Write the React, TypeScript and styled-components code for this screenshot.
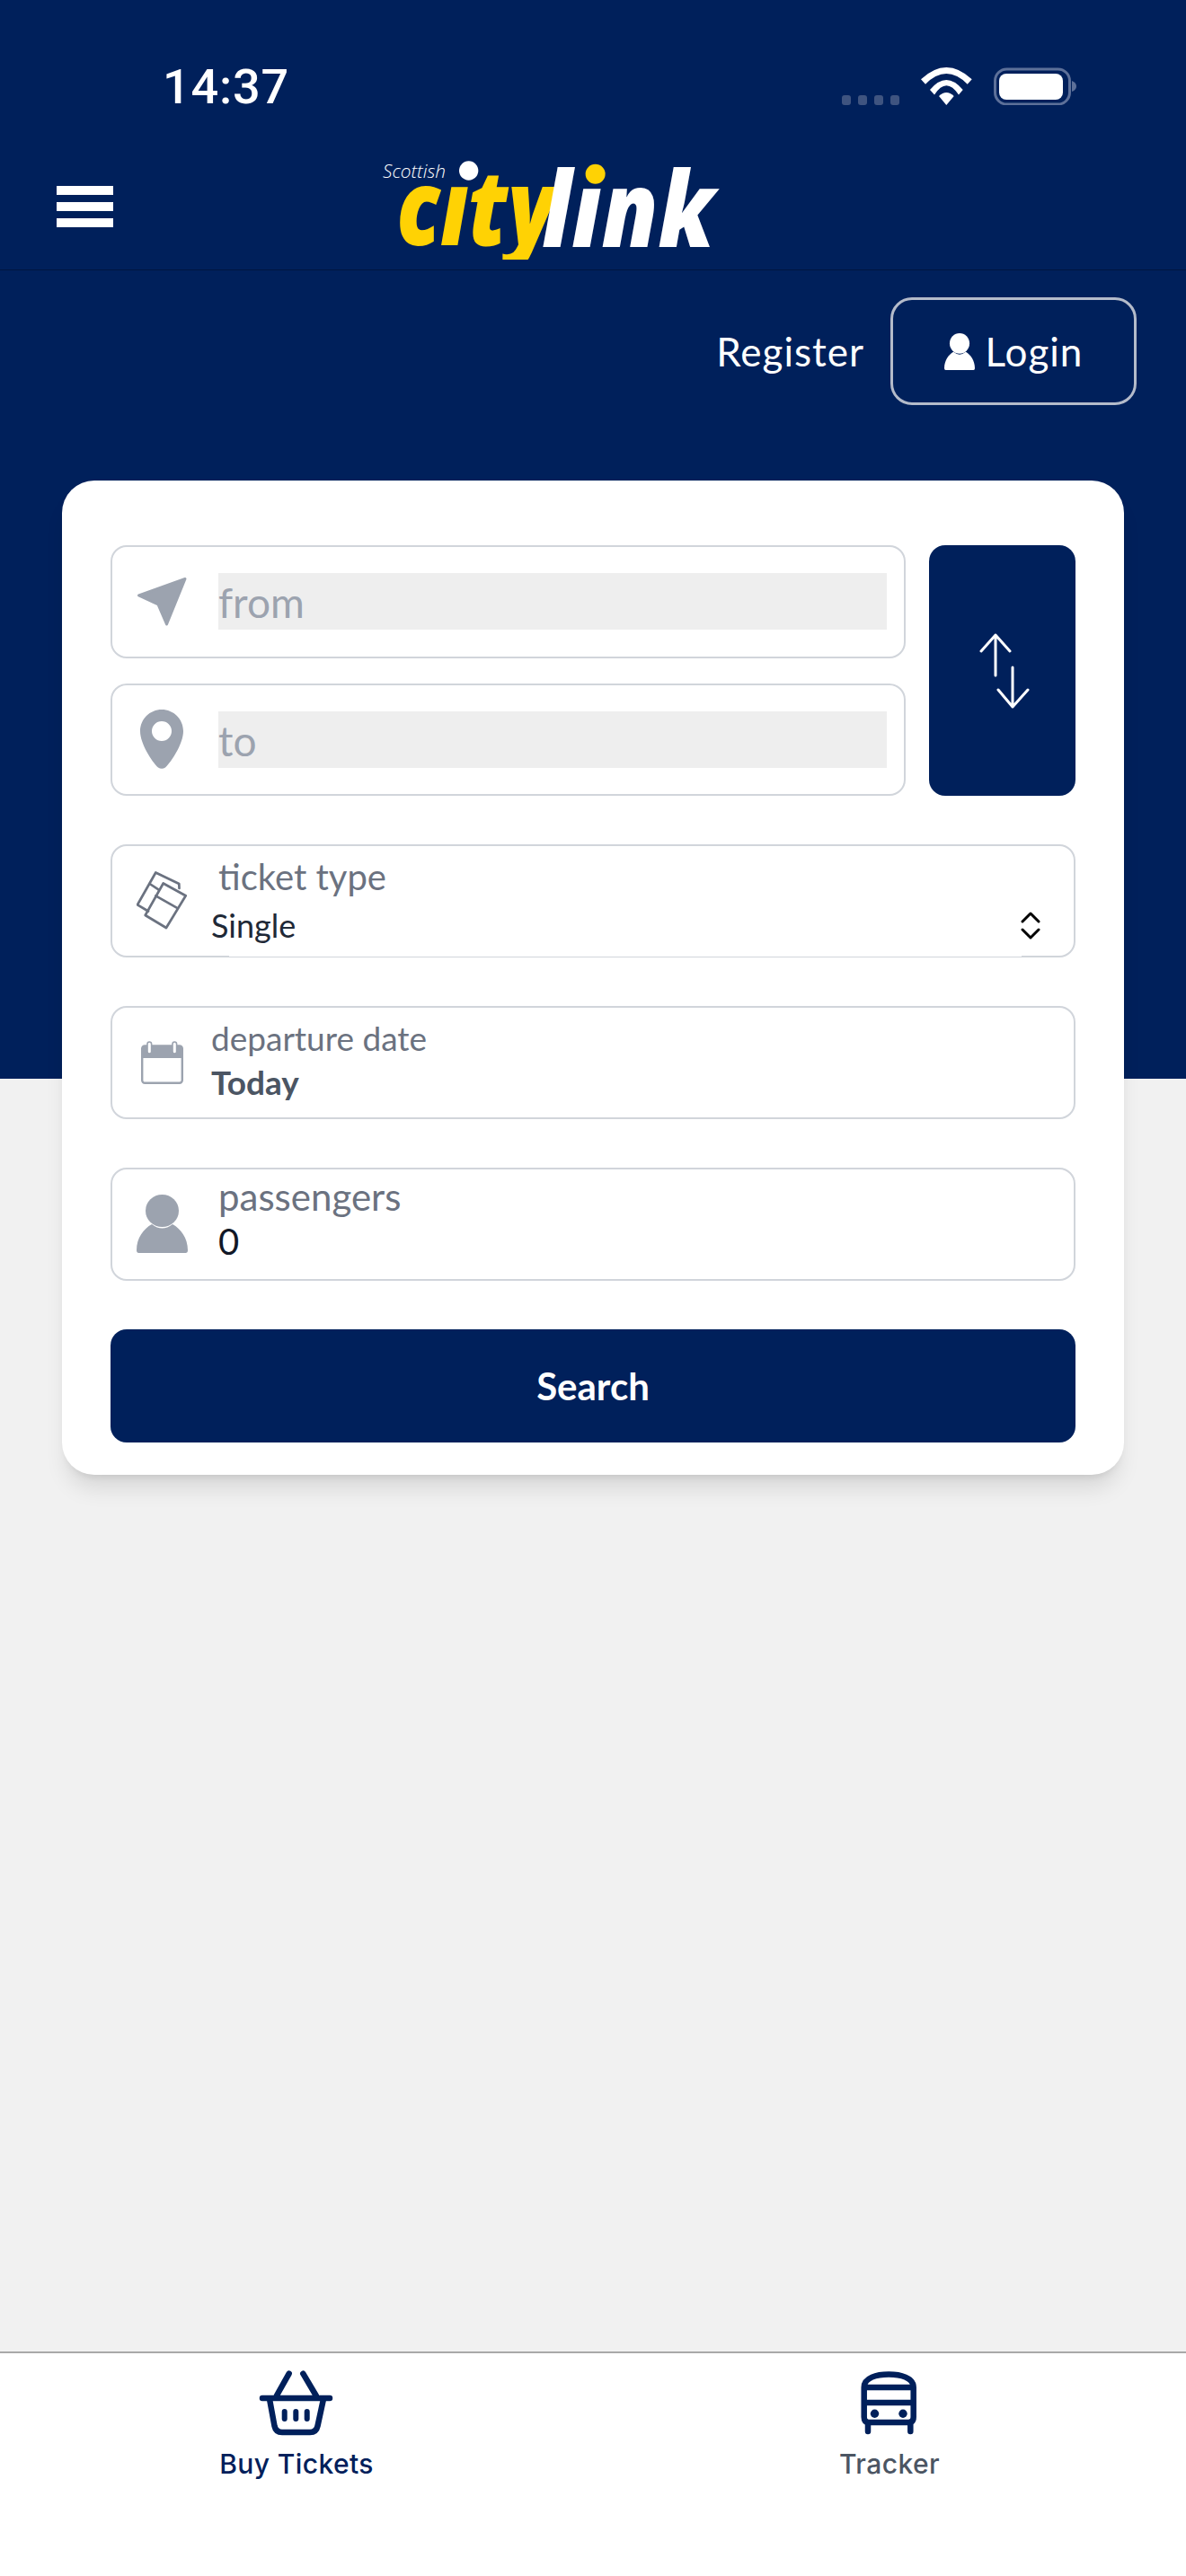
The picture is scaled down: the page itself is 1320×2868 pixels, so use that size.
import React from 'react'
import styled, { createGlobalStyle } from 'styled-components'

const NAVY = '#00205B'

const GlobalStyle = createGlobalStyle`
  html, body { margin: 0; padding: 0; background: #f1f1f1; }
  * { box-sizing: border-box; }
  body { font-family: 'Lato', 'Noto Sans', sans-serif; }
`

const Page = styled.div`
  width: 1320px;
  height: 2868px;
  display: flex;
  flex-direction: column;
  background: #f1f1f1;
  overflow: hidden;
`
const Hero = styled.div`
  height: 1201px;
  flex: none;
  background: ${NAVY};
`
const StatusBar = styled.div`
  height: 160px;
  padding: 75px 122px 0 181px;
  display: flex;
  justify-content: space-between;
  align-items: flex-start;
`
const Clock = styled.span`
  font-family: 'Roboto', 'Liberation Sans', sans-serif;
  font-weight: 500;
  font-size: 54px;
  line-height: 44px;
  letter-spacing: 0.8px;
  color: #fff;
`
const Header = styled.header`
  height: 141px;
  padding: 0 63px;
  display: flex;
  align-items: center;
  gap: 294px;
  border-bottom: 1px solid #00153f;
`
const Burger = styled.div`
  width: 63px;
  display: flex;
  flex-direction: column;
  gap: 8px;
  span {
    display: block;
    height: 10px;
    background: #fff;
  }
`
const Logo = styled.svg`
  margin-top: 9px;
  flex: none;
  overflow: visible;
`
const AuthRow = styled.div`
  padding: 30px 55px 0 0;
  display: flex;
  justify-content: flex-end;
  align-items: center;
  gap: 29px;
`
const RegisterLink = styled.a`
  font-size: 44px;
  letter-spacing: 1px;
  color: #fff;
  line-height: 1;
`
const LoginButton = styled.button`
  width: 274px;
  height: 120px;
  display: flex;
  align-items: center;
  justify-content: center;
  gap: 12px;
  background: none;
  border: 3px solid #b4bbca;
  border-radius: 24px;
  color: #fff;
  font: 400 44px 'Lato', sans-serif;
  letter-spacing: 1px;
`
const Card = styled.section`
  margin: 84px 69px 0;
  padding: 72px 54px 36px;
  background: #fff;
  border-radius: 36px;
  display: flex;
  flex-direction: column;
  gap: 54.5px;
  box-shadow: 0 20px 25px -5px rgba(0, 0, 0, 0.1), 0 8px 10px -6px rgba(0, 0, 0, 0.1);
`
const RouteRow = styled.div`
  display: flex;
  gap: 26px;
  margin-bottom: -0.5px;
`
const RouteFields = styled.div`
  flex: 1;
  display: flex;
  flex-direction: column;
  gap: 28px;
`
const SwapButton = styled.button`
  width: 163px;
  flex: none;
  display: flex;
  align-items: center;
  justify-content: center;
  padding: 0 0 0 4px;
  background: ${NAVY};
  border: none;
  border-radius: 18px;
`
const Field = styled.div<{ $notched?: boolean }>`
  position: relative;
  height: 125.5px;
  display: flex;
  align-items: center;
  border: 2.5px solid #d1d5db;
  border-radius: 18px;
  padding-right: 19px;
  background: #fff;
  ${p => p.$notched && `
    &::after {
      content: '';
      position: absolute;
      left: 130px;
      right: 58px;
      bottom: -2.5px;
      height: 2.5px;
      background: #fff;
      border-bottom: 1px solid #d1d5db;
    }
  `}
`
const IconSlot = styled.div`
  width: 110px;
  flex: none;
  display: flex;
  align-items: center;
  justify-content: center;
`
const FieldBody = styled.div<{ $lift?: number }>`
  flex: 1;
  min-width: 0;
  display: flex;
  flex-direction: column;
  padding-bottom: ${p => p.$lift ?? 0}px;
`
const PlaceInput = styled.div`
  height: 63px;
  margin-left: 8px;
  background: #eeeeee;
  color: #9ca3af;
  font-size: 46px;
  line-height: 66px;
`
const FieldLabel = styled.div<{ $size: number; $indent?: boolean; $line: number }>`
  color: #6b7280;
  font-size: ${p => p.$size}px;
  line-height: ${p => p.$line}px;
  margin-left: ${p => (p.$indent ? 8 : 0)}px;
`
const SelectValue = styled.div`
  display: flex;
  align-items: center;
  justify-content: space-between;
  padding: 2px 18px 0 0;
  height: 53px;
  color: #1f2937;
  font-size: 36px;
`
const DateValue = styled.div`
  color: #4b5563;
  font-size: 37px;
  font-weight: 700;
  line-height: 49px;
`
const CountValue = styled.div`
  margin-left: 8px;
  color: #111827;
  font-size: 40px;
  line-height: 50px;
`
const SearchButton = styled.button`
  height: 126px;
  background: ${NAVY};
  border: none;
  border-radius: 18px;
  color: #fff;
  font: 700 42px 'Lato', sans-serif;
`
const Spacer = styled.div`
  flex: 1;
`
const TabBar = styled.nav`
  height: 250px;
  flex: none;
  display: grid;
  grid-template-columns: 1fr 1fr;
  background: #fff;
  border-top: 2px solid #a9a9a9;
`
const Tab = styled.div<{ $active?: boolean }>`
  padding-top: 10px;
  display: flex;
  flex-direction: column;
  align-items: center;
  gap: 2px;
  font-family: 'Inter', 'Liberation Sans', sans-serif;
  font-weight: 500;
  font-size: 30px;
  line-height: 42px;
  letter-spacing: 0.4px;
  color: ${p => (p.$active ? NAVY : '#4b5563')};
`

const PersonIcon = ({ width, height, color }: { width: number; height: number; color: string }) => (
  <svg width={width} height={height} viewBox="0 0 57 65" preserveAspectRatio="none" fill={color}>
    <ellipse cx="28.5" cy="18" rx="18.5" ry="18" />
    <path d="M2.5 65Q0 65 0 62C0 48 8 38 17 33Q28.5 42 40 33C49 38 57 48 57 62Q57 65 54.5 65Z" />
  </svg>
)

const StatusIcons = () => (
  <svg width="261" height="42" viewBox="0 0 261 42">
    <g fill="#3f5480">
      <rect x="0" y="31" width="10" height="11" rx="3" />
      <rect x="18" y="31" width="10" height="11" rx="3" />
      <rect x="36" y="31" width="10" height="11" rx="3" />
      <rect x="54" y="31" width="10" height="11" rx="3" />
    </g>
    <g fill="#fff">
      <path d="M88 13.3Q116.3-13.3 144.7 13.3L139.7 18.7Q116.3-4.5 93 18.7Z" />
      <path d="M98 25Q116.3 3 134.7 25L130 30.5Q116.3 10 103 30.5Z" />
      <path d="M108 32Q116.3 24 124.7 32L116.3 42Z" />
    </g>
    <rect x="170.5" y="2" width="83" height="39" rx="13" fill="none" stroke="#5d7099" strokeWidth="3" />
    <rect x="175" y="7" width="71" height="29" rx="8" fill="#fff" />
    <path d="M256 15Q261 17 261 21Q261 25 256 27Z" fill="#5d7099" />
  </svg>
)

const CityLinkLogo = () => (
  <Logo width="383.3" height="116.7" viewBox="240 80 1150 350">
    <defs>
      {/* the font's own i-dots are cut away, the logo has its dots elsewhere */}
      <clipPath id="noCityDot">
        <path clipRule="evenodd" d="M200 0H1500V420H200ZM430 50H575V176H430Z" />
      </clipPath>
      <clipPath id="noLinkDot">
        <path clipRule="evenodd" d="M700 0H1500V480H700ZM925 50H1040V176H925Z" />
      </clipPath>
    </defs>
    <text x="258" y="146" fontFamily="'Open Sans', sans-serif" fontStyle="italic" fontWeight="300" fontSize="62" fill="#fff" textLength="210" lengthAdjust="spacingAndGlyphs">Scottish</text>
    <g clipPath="url(#noCityDot)">
      <text x="304" y="370" fontFamily="'Open Sans', sans-serif" fontStyle="italic" fontWeight="800" fontSize="352" fill="#FFD204" textLength="530" lengthAdjust="spacingAndGlyphs">city</text>
    </g>
    <g clipPath="url(#noLinkDot)">
      <text x="790" y="376" fontFamily="'Open Sans', sans-serif" fontStyle="italic" fontWeight="800" fontSize="352" fill="#fff" textLength="576" lengthAdjust="spacingAndGlyphs">link</text>
    </g>
    <circle cx="545" cy="122" r="32" fill="#fff" />
    <circle cx="968" cy="133" r="33" fill="#FFD204" />
  </Logo>
)

const NavArrowIcon = () => (
  <svg width="56" height="55" viewBox="-1 -1 56 55" fill="#9ca3af" stroke="#9ca3af" strokeWidth="3" strokeLinejoin="round">
    <path d="M1.5 20L53 1.5L32.5 52L23 30Z" />
  </svg>
)

const PinIcon = () => (
  <svg width="48" height="66" viewBox="0 0 48 66">
    <path fillRule="evenodd" fill="#9ca3af" d="M24 0C10.7 0 0 10.7 0 24C0 38 13 58 20 64.5Q24 67 28 64.5C35 58 48 38 48 24C48 10.7 37.3 0 24 0ZM24 13A11 11 0 1 1 24 35A11 11 0 1 1 24 13Z" />
  </svg>
)

const TicketsIcon = () => (
  <svg width="56" height="65" viewBox="12 11 56 65" fill="none" stroke="#6b7280" strokeWidth="2.7" strokeLinejoin="round" strokeLinecap="round">
    <path d="M59.5 30L59.3 25L33.3 12.5L13 48.3L25 55.5" />
    <path d="M41.7 24.5L66.7 38.3L45 74L21.7 60Z" />
    <path d="M26.7 25L36.7 31.7" />
    <path d="M33.3 38.3L56.7 51.7" />
  </svg>
)

const CalendarIcon = () => (
  <svg width="47" height="48" viewBox="0 0 47 48" fill="none">
    <rect x="1.2" y="5.5" width="44.6" height="41.3" rx="3" stroke="#9ca3af" strokeWidth="2.4" />
    <path d="M1 19V7.5Q1 5 3.5 5H43.5Q46 5 46 7.5V19Z" fill="#9ca3af" />
    <rect x="7" y="1" width="4.6" height="13" rx="2.3" fill="#fff" stroke="#9ca3af" strokeWidth="1.6" />
    <rect x="35" y="1" width="4.6" height="13" rx="2.3" fill="#fff" stroke="#9ca3af" strokeWidth="1.6" />
  </svg>
)

const SwapIcon = () => (
  <svg width="56" height="84" viewBox="0 0 56 84" fill="none" stroke="#fff" strokeWidth="3" strokeLinecap="round" strokeLinejoin="round">
    <path d="M18 2V47M2 20L18 2L34 20" />
    <path d="M37 38V82M21 63L37 82L54 63" />
  </svg>
)

const UpDownIcon = () => (
  <svg width="22" height="31" viewBox="0 0 22 31" fill="none" stroke="#000" strokeWidth="3" strokeLinecap="round" strokeLinejoin="round">
    <path d="M2 11L11 2L20 11" />
    <path d="M2 20L11 29L20 20" />
  </svg>
)

const BasketIcon = () => (
  <svg width="100" height="90" viewBox="0 0 100 90" fill="none" stroke={NAVY} strokeLinecap="round" strokeLinejoin="round">
    <path strokeWidth="6.5" d="M12 40H87M41.7 12.7L28 37M57.3 12.7L71.7 37" />
    <path strokeWidth="6.5" d="M20 41L25.5 71Q27 78 34 78H65Q72 78 73.5 71L80 41" />
    <path strokeWidth="6" d="M36.7 55V63M49.3 55V63M61.7 55V63" />
  </svg>
)

const BusIcon = () => (
  <svg width="100" height="90" viewBox="0 0 100 90" fill="none" stroke={NAVY} strokeWidth="6.5" strokeLinecap="round" strokeLinejoin="round">
    <path d="M21.7 28C21.7 17 36 13.5 49.2 13.5C62 13.5 76.7 17 76.7 28V61Q76.7 67 71 67H27Q21.7 67 21.7 61Z" />
    <path strokeLinecap="butt" d="M22 28H76M22 45H76" />
    <path d="M26 68V77M73.3 68V77" />
    <circle cx="33.5" cy="57.3" r="4.7" fill={NAVY} stroke="none" />
    <circle cx="65" cy="57.3" r="4.7" fill={NAVY} stroke="none" />
  </svg>
)

export default function App() {
  return (
    <Page>
      <GlobalStyle />
      <Hero>
        <StatusBar>
          <Clock>14:37</Clock>
          <StatusIcons />
        </StatusBar>
        <Header>
          <Burger><span /><span /><span /></Burger>
          <CityLinkLogo />
        </Header>
        <AuthRow>
          <RegisterLink>Register</RegisterLink>
          <LoginButton>
            <PersonIcon width={34} height={41} color="#fff" />
            Login
          </LoginButton>
        </AuthRow>
        <Card>
          <RouteRow>
            <RouteFields>
              <Field>
                <IconSlot><NavArrowIcon /></IconSlot>
                <FieldBody><PlaceInput>from</PlaceInput></FieldBody>
              </Field>
              <Field>
                <IconSlot><PinIcon /></IconSlot>
                <FieldBody><PlaceInput>to</PlaceInput></FieldBody>
              </Field>
            </RouteFields>
            <SwapButton><SwapIcon /></SwapButton>
          </RouteRow>
          <Field $notched>
            <IconSlot><TicketsIcon /></IconSlot>
            <FieldBody>
              <FieldLabel $size={40} $line={53} $indent>ticket type</FieldLabel>
              <SelectValue>Single<UpDownIcon /></SelectValue>
            </FieldBody>
          </Field>
          <Field>
            <IconSlot><CalendarIcon /></IconSlot>
            <FieldBody $lift={6}>
              <FieldLabel $size={37} $line={49}>departure date</FieldLabel>
              <DateValue>Today</DateValue>
            </FieldBody>
          </Field>
          <Field>
            <IconSlot><PersonIcon width={57} height={65} color="#9ca3af" /></IconSlot>
            <FieldBody $lift={12}>
              <FieldLabel $size={42} $line={50} $indent>passengers</FieldLabel>
              <CountValue>0</CountValue>
            </FieldBody>
          </Field>
          <SearchButton>Search</SearchButton>
        </Card>
      </Hero>
      <Spacer />
      <TabBar>
        <Tab $active><BasketIcon />Buy Tickets</Tab>
        <Tab><BusIcon />Tracker</Tab>
      </TabBar>
    </Page>
  )
}
